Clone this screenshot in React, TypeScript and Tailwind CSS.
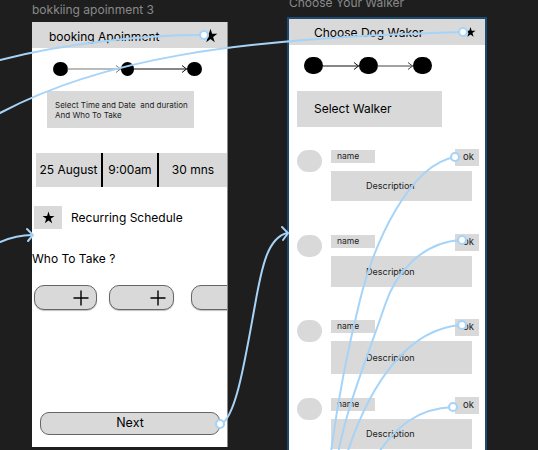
import React from "react";

const font = { fontFamily: "Inter, 'Noto Sans', sans-serif" };

function Star({ className }: { className?: string }) {
  return (
    <svg viewBox="0 0 24 24" className={className}>
      <polygon
        points="12,1 14.6,9 23,9.2 16.2,14.2 18.8,22.6 12,17.4 5.2,22.6 7.8,14.2 1,9.2 9.4,9"
        fill="black"
      />
    </svg>
  );
}

function Plus() {
  return (
    <svg width="16" height="16" viewBox="0 0 16 16">
      <path d="M8 0.5 V15.5 M0.5 8 H15.5" stroke="black" strokeWidth="1.4" />
    </svg>
  );
}

function Connector({ width, color }: { width: number; color: string }) {
  return (
    <svg width={width} height="14" viewBox={`0 0 ${width} 14`} className="-mx-px">
      <path d={`M0 7 H${width - 1}`} stroke={color} strokeWidth="1.2" />
      <path d={`M${width - 6} 3.5 L${width - 1.5} 7 L${width - 6} 10.5`} stroke={color} strokeWidth="1" fill="none" />
    </svg>
  );
}

function WalkerCard({ top, descH }: { top: number; descH: number }) {
  return (
    <div className="flex" style={{ marginTop: top }}>
      <div className="ml-[8px] mt-px h-[22px] w-[25px] rounded-full bg-[#d9d9d9]" />
      <div className="ml-[9px] flex flex-col">
        <div className="flex items-start">
          <div className="mt-px flex h-[13px] w-[44px] items-center bg-[#d9d9d9] pl-[6px] text-[8.5px] text-[#222]">
            name
          </div>
          <div className="ml-[80px] flex h-[17px] w-[24px] items-center bg-[#d9d9d9] pl-[8px] text-[9.5px] text-[#222]">
            ok
          </div>
        </div>
        <div
          className="mt-[5px] flex w-[141px] items-center bg-[#d9d9d9] pl-[35px] text-[9px] text-[#222]"
          style={{ height: descH }}
        >
          Description
        </div>
      </div>
    </div>
  );
}

function BookingFrame() {
  return (
    <div className="absolute left-[32px] top-0 w-[196px]">
      <div className="h-[22px] pt-[2px] text-[12px] leading-[16px] text-[#8a8a8a]">bokkiing apoinment 3</div>
      <div className="flex h-[425px] flex-col overflow-hidden border-r border-[#8a8a8a] bg-white text-black">
        <div className="flex h-[26px] items-center justify-between bg-[#d9d9d9] pl-[17px] pr-[9px]">
          <span className="pt-[3px] text-[12px]">booking Apoinment</span>
          <Star className="h-[19px] w-[15px]" />
        </div>
        <div className="ml-[21px] mt-[14px] flex items-center">
          <div className="h-[14px] w-[15px] rounded-full bg-black" />
          <Connector width={55} color="#777" />
          <div className="h-[14px] w-[13px] rounded-full bg-black" />
          <Connector width={55} color="#111" />
          <div className="h-[14px] w-[15px] rounded-full bg-black" />
        </div>
        <div className="ml-[15px] mt-[15px] flex h-[37px] w-[147px] flex-col justify-center whitespace-nowrap bg-[#d9d9d9] pl-[8px] text-[8px] leading-[10px] text-[#222]">
          <span>Select Time and Date&nbsp; and duration</span>
          <span>And Who To Take</span>
        </div>
        <div className="ml-[4px] mt-[25px] flex h-[34px] bg-[#d9d9d9] text-[12px]">
          <div className="flex w-[65px] items-center justify-center">25 August</div>
          <div className="w-[2px] bg-black" />
          <div className="flex w-[54px] items-center justify-center">9:00am</div>
          <div className="w-[2px] bg-black" />
          <div className="flex flex-1 items-center justify-center">30 mns</div>
        </div>
        <div className="ml-[2px] mt-[19px] flex items-center">
          <div className="flex h-[23px] w-[28px] items-center justify-center bg-[#d9d9d9]">
            <Star className="h-[13px] w-[13px]" />
          </div>
          <span className="ml-[9px] text-[12px]">Recurring Schedule</span>
        </div>
        <div className="mt-[22px] text-[12px] leading-[16px]">Who To Take ?</div>
        <div className="mt-[18px] flex">
          <div className="ml-[2px] flex h-[25px] w-[63px] shrink-0 items-center justify-end rounded-[10px] border border-[#666] bg-[#d9d9d9] pr-[7px] shadow-[0_1px_1px_rgba(0,0,0,0.25)]">
            <Plus />
          </div>
          <div className="ml-[12px] flex h-[25px] w-[65px] shrink-0 items-center justify-end rounded-[10px] border border-[#666] bg-[#d9d9d9] pr-[7px] shadow-[0_1px_1px_rgba(0,0,0,0.25)]">
            <Plus />
          </div>
          <div className="ml-[17px] h-[25px] w-[63px] shrink-0 rounded-[10px] border border-[#666] bg-[#d9d9d9] shadow-[0_1px_1px_rgba(0,0,0,0.25)]" />
        </div>
        <div className="ml-[8px] mt-[102px] flex h-[23px] w-[180px] items-center justify-center rounded-[9px] border border-[#666] bg-[#d9d9d9] text-[12.5px]">
          Next
        </div>
      </div>
    </div>
  );
}

function WalkerFrame() {
  return (
    <div className="absolute left-[287px] top-[-5px] w-[200px]">
      <div className="h-[22px] pl-[2px] text-[12px] leading-[16px] text-[#8a8a8a]">Choose Your Walker</div>
      <div className="flex h-[435px] flex-col overflow-hidden border-2 border-[#1d4a72] bg-white text-black">
        <div className="flex h-[26px] shrink-0 items-center justify-between bg-[#d9d9d9] pl-[25px] pr-[9px]">
          <span className="pt-[2px] text-[12px]">Choose Dog Waker</span>
          <Star className="h-[14px] w-[11px]" />
        </div>
        <div className="ml-[15px] mt-[12px] flex shrink-0 items-center">
          <div className="h-[17px] w-[19px] rounded-full bg-black" />
          <Connector width={38} color="#111" />
          <div className="h-[17px] w-[19px] rounded-full bg-black" />
          <Connector width={37} color="#444" />
          <div className="h-[17px] w-[19px] rounded-full bg-black" />
        </div>
        <div className="ml-[8px] mt-[17px] flex h-[36px] w-[145px] shrink-0 items-center bg-[#d9d9d9] pl-[17px] text-[12px]">
          Select Walker
        </div>
        <WalkerCard top={22} descH={30} />
        <WalkerCard top={33} descH={31} />
        <WalkerCard top={32} descH={33} />
        <WalkerCard top={23} descH={30} />
      </div>
    </div>
  );
}

function Wires() {
  const c = "#a6d4f8";
  return (
    <svg className="pointer-events-none absolute inset-0" width="538" height="450" viewBox="0 0 538 450">
      <g stroke={c} strokeWidth="2" fill="none" strokeLinecap="round">
        <path d="M0,60 C70,42 150,35 200,35" />
        <path d="M0,113 C100,60 230,38 463,32" />
        <path d="M0,242 C12,237 22,235 32,235" />
        <path d="M27,229 L33,235 L28,241" />
        <path d="M220,425 C236,418 245,360 255,305 C262,265 268,238 287,233" />
        <path d="M282,227 L288,233 L283,240" />
        <path d="M455,157 C410,165 375,240 360,300 C345,360 335,420 330,460" />
        <path d="M462,240 C420,242 395,275 385,305 C370,350 345,410 337,460" />
        <path d="M462,325 C410,328 370,380 345,460" />
        <path d="M453,407 C420,408 395,425 374,460" />
      </g>
      <g stroke={c} strokeWidth="2.2" fill="white">
        <circle cx="204" cy="35" r="4" />
        <circle cx="463" cy="32" r="4" />
        <circle cx="220" cy="424" r="4" />
        <circle cx="455" cy="157" r="4" />
        <circle cx="462" cy="240" r="4" />
        <circle cx="462" cy="325" r="4" />
        <circle cx="453" cy="407" r="4" />
      </g>
    </svg>
  );
}

export default function App() {
  return (
    <div className="relative h-[450px] w-[538px] overflow-hidden bg-[#1e1e1e]" style={font}>
      <BookingFrame />
      <WalkerFrame />
      <Wires />
    </div>
  );
}
